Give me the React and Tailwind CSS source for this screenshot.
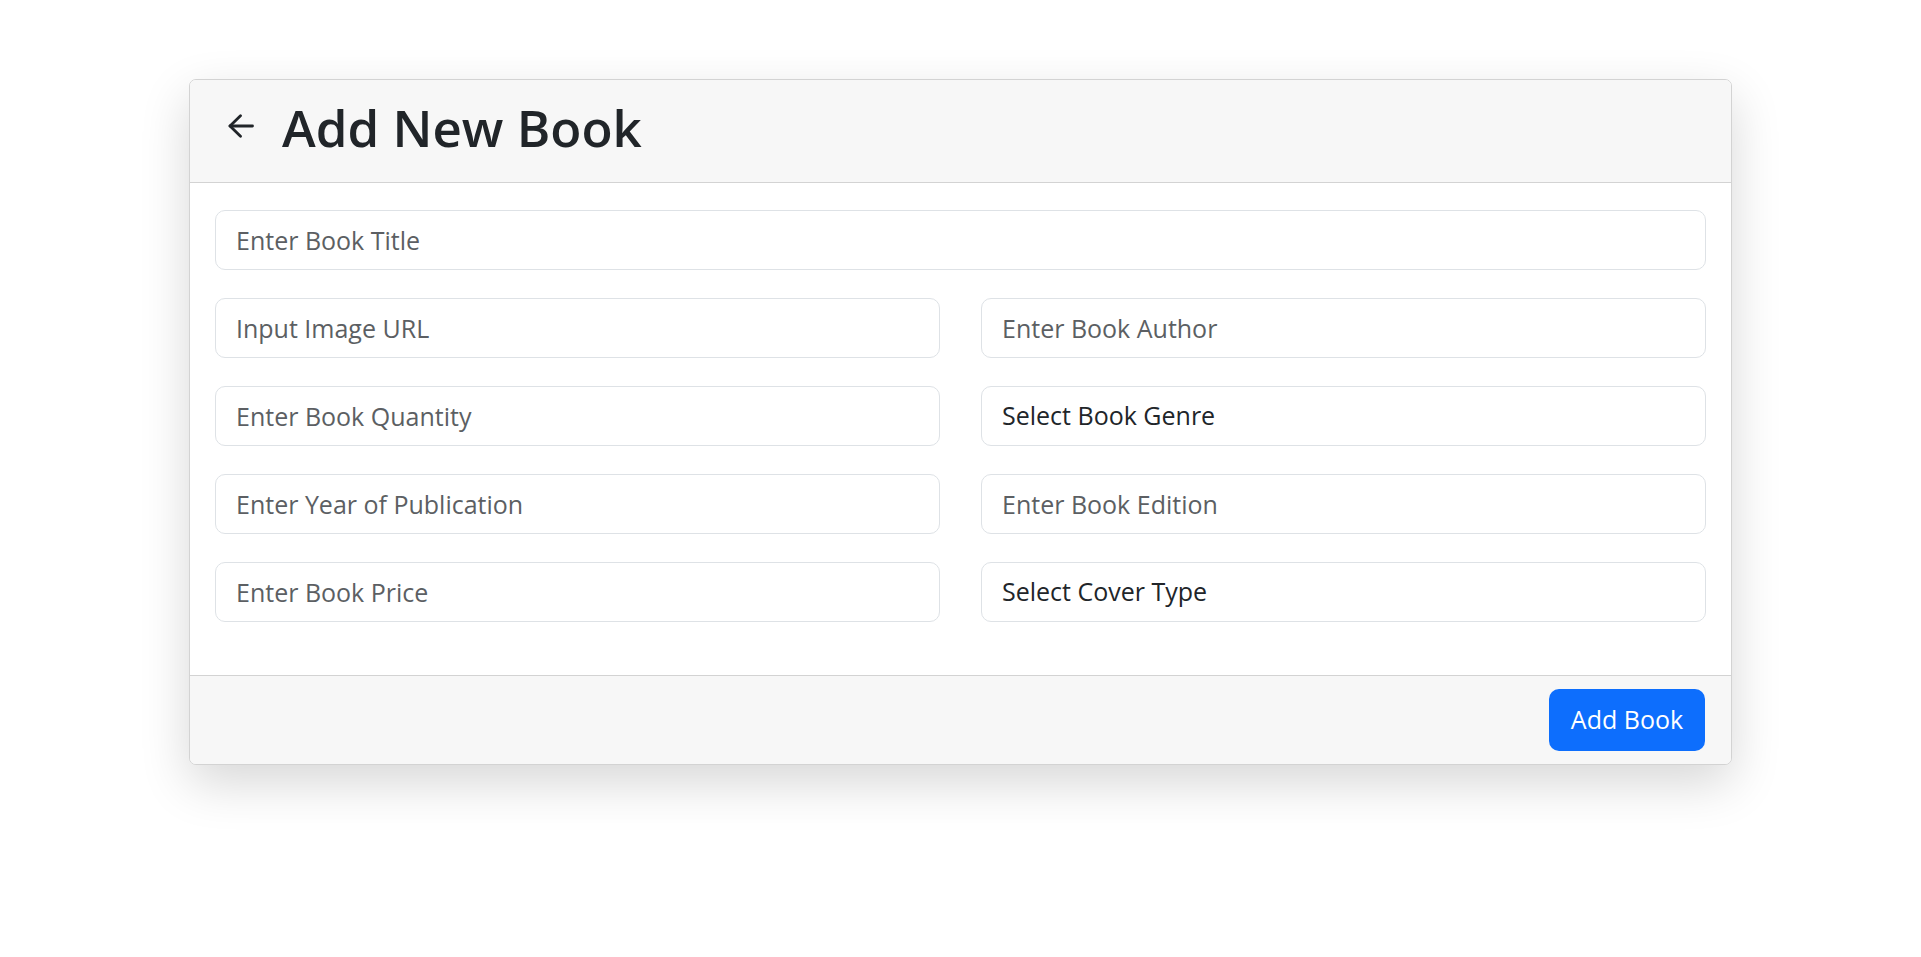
import React from 'react';

const fields = [
  [{ ph: 'Input Image URL' }, { ph: 'Enter Book Author' }],
  [{ ph: 'Enter Book Quantity' }, { label: 'Select Book Genre' }],
  [{ ph: 'Enter Year of Publication' }, { ph: 'Enter Book Edition' }],
  [{ ph: 'Enter Book Price' }, { label: 'Select Cover Type' }],
];

function Field({ ph, label }) {
  if (label) {
    return (
      <div className="h-[60px] rounded-[10px] border border-[#dee2e6] bg-white px-[20px] flex items-center text-[25px] text-[#212529]">
        {label}
      </div>
    );
  }
  return (
    <input
      placeholder={ph}
      className="h-[60px] w-full rounded-[10px] border border-[#dee2e6] bg-white px-[20px] text-[25px] text-[#212529] placeholder:text-[#5c5f63] outline-none"
    />
  );
}

export default function App() {
  return (
    <div className="min-h-screen bg-white pt-[79px] font-['Open_Sans',sans-serif]">
      <div className="mx-auto w-[1543px] rounded-[7px] border border-[#d3d3d3] bg-white shadow-[0_18px_50px_rgba(0,0,0,0.16)] overflow-hidden">
        <div className="h-[103px] flex items-center gap-[28px] pl-[38px] bg-[#f7f7f7] border-b border-[#d3d3d3]">
          <svg width="26" height="24" viewBox="0 0 26 24" fill="none" stroke="#212529" strokeWidth="2.8" strokeLinecap="round" strokeLinejoin="round" className="-mt-[10px]">
            <path d="M2 12H24.5" />
            <path d="M12.5 1.8L2 12L12.5 22.2" />
          </svg>
          <h1 className="text-[51px] font-[560] text-[#212529] leading-none -mt-[8px]">Add New Book</h1>
        </div>
        <div className="px-[25px] pt-[27px] pb-[53px] flex flex-col gap-[28px]">
          <Field ph="Enter Book Title" />
          {fields.map((row, i) => (
            <div key={i} className="grid grid-cols-2 gap-x-[41px]">
              <Field {...row[0]} />
              <Field {...row[1]} />
            </div>
          ))}
        </div>
        <div className="bg-[#f7f7f7] border-t border-[#d3d3d3] px-[26px] py-[13px] flex justify-end">
          <button className="h-[62px] w-[156px] rounded-[10px] bg-[#0d6efd] text-white text-[25px]">
            Add Book
          </button>
        </div>
      </div>
    </div>
  );
}
